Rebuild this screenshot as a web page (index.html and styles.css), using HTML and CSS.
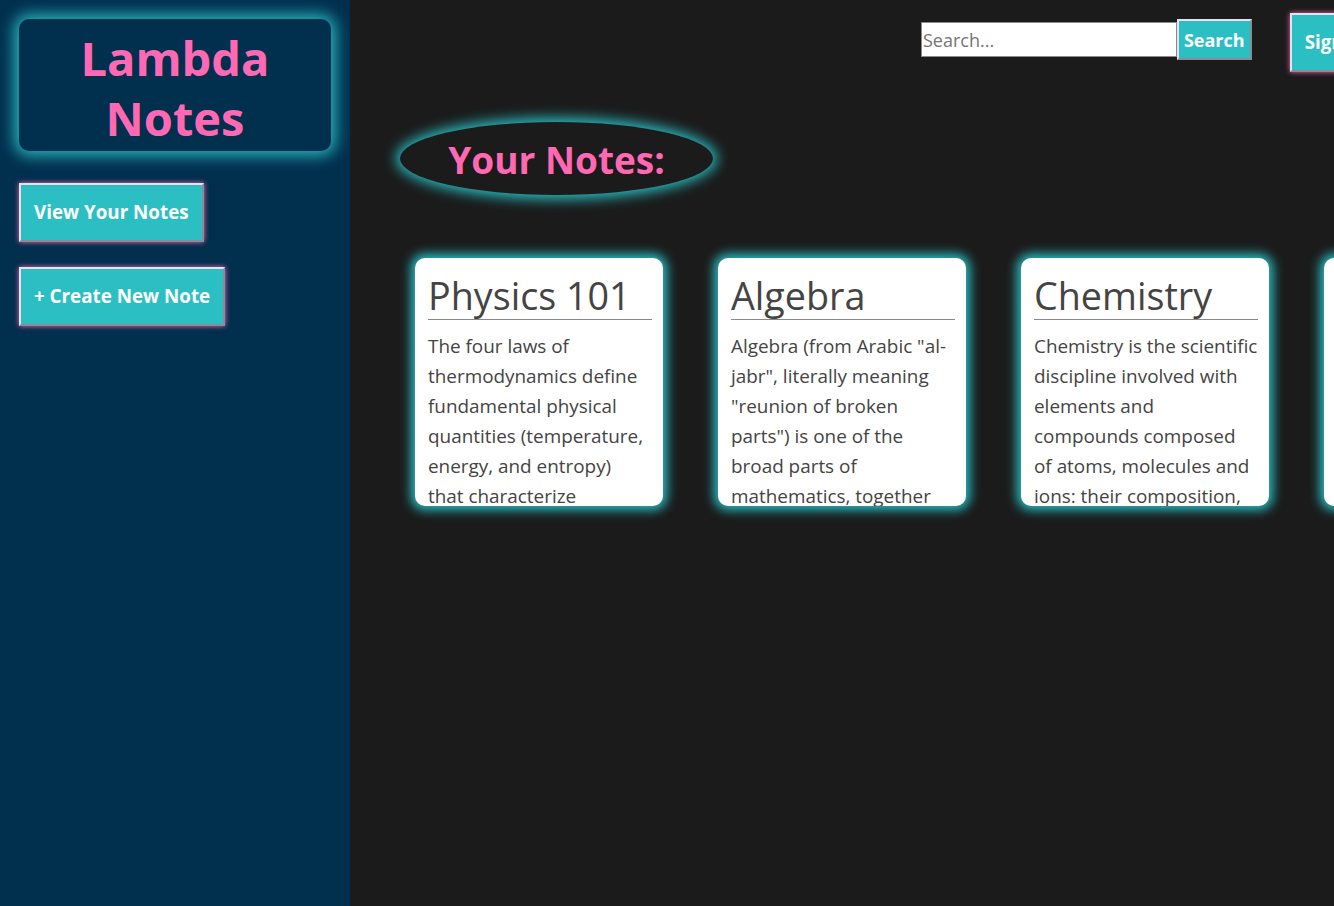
FILE: index.html
```html
<!DOCTYPE html>
<html lang="en">
<head>
<meta charset="utf-8">
<title>Lambda Notes</title>
<link rel="stylesheet" href="styles.css">
</head>
<body>
<div class="app">
  <aside class="sidebar">
    <div class="logo">Lambda Notes</div>
    <button class="btn">View Your Notes</button>
    <button class="btn">+ Create New Note</button>
  </aside>
  <main class="main">
    <header class="topbar">
      <form class="search">
        <input class="search-input" type="text" placeholder="Search...">
        <button class="search-btn" type="button">Search</button>
      </form>
      <button class="btn sign">Sign Out</button>
    </header>
    <h2 class="heading">Your Notes:</h2>
    <section class="cards">
      <article class="card">
        <h3 class="card-title">Physics 101</h3>
        <p class="card-body">The four laws of thermodynamics define fundamental physical quantities (temperature, energy, and entropy) that characterize thermodynamic systems at thermal equilibrium.</p>
      </article>
      <article class="card">
        <h3 class="card-title">Algebra</h3>
        <p class="card-body">Algebra (from Arabic "al-jabr", literally meaning "reunion of broken parts") is one of the broad parts of mathematics, together with number theory, geometry and analysis.</p>
      </article>
      <article class="card">
        <h3 class="card-title">Chemistry</h3>
        <p class="card-body">Chemistry is the scientific discipline involved with elements and compounds composed of atoms, molecules and ions: their composition, structure, properties and behavior.</p>
      </article>
      <article class="card">
        <h3 class="card-title">Biology</h3>
        <p class="card-body">Biology is the natural science that studies life and living organisms.</p>
      </article>
    </section>
  </main>
</div>
</body>
</html>
```

FILE: styles.css
```css
html, body {
  margin: 0;
  padding: 0;
  height: 100%;
  overflow: hidden;
}
body {
  font-family: "Open Sans", "Noto Sans", sans-serif;
  background: #1b1b1b;
}
.app {
  display: flex;
  height: 906px;
}
.sidebar {
  width: 350px;
  flex: none;
  background: #012f4e;
  padding: 19px 19px;
  box-sizing: border-box;
  display: flex;
  flex-direction: column;
  align-items: flex-start;
}
.logo {
  width: 312px;
  height: 132px;
  box-sizing: border-box;
  border-radius: 10px;
  background: #012f4e;
  box-shadow: 0 0 16px 4px #2bbfc4;
  color: #ff69b4;
  font-weight: 700;
  font-size: 47px;
  line-height: 60px;
  text-align: center;
  padding: 9px 50px 0;
  margin-bottom: 32px;
}
.btn {
  font-family: inherit;
  background: #2bbfc4;
  color: #fff;
  font-weight: 700;
  font-size: 18.8px;
  line-height: 25px;
  padding: 15px 13px;
  border: 2px solid;
  border-color: #e6e2f2 #8c8c96 #8c8c96 #e6e2f2;
  box-shadow: 0 0 5px #ff69b4;
  margin-bottom: 25px;
  cursor: pointer;
}
.main {
  flex: 1;
  min-width: 0;
  display: flex;
  flex-direction: column;
}
.topbar {
  display: flex;
  align-items: flex-start;
  justify-content: flex-end;
  margin-right: -65px;
  padding-top: 13px;
}
.search {
  display: flex;
  align-items: center;
  margin: 6px 38px 0 0;
}
.search-input {
  width: 256px;
  height: 35px;
  box-sizing: border-box;
  border: 1px solid #8a8a8a;
  font-family: inherit;
  font-size: 18px;
  padding: 0 1px;
  outline: none;
}
.search-input::placeholder {
  color: #757575;
}
.search-btn {
  height: 41px;
  font-family: inherit;
  background: #2bbfc4;
  color: #fff;
  font-weight: 700;
  font-size: 18px;
  padding: 0 5px;
  border: 2px solid;
  border-color: #e6e2f2 #8c8c96 #8c8c96 #e6e2f2;
}
.sign {
  margin-bottom: 0;
  white-space: nowrap;
}
.heading {
  align-self: flex-start;
  margin: 50px 0 0 50px;
  width: 313px;
  height: 73px;
  box-sizing: border-box;
  border-radius: 50%;
  background: #1b1b1b;
  box-shadow: 0 0 13px 4px #2bbfc4;
  color: #ff69b4;
  font-size: 37px;
  font-weight: 700;
  line-height: 75px;
  text-align: center;
}
.cards {
  display: flex;
  gap: 55px;
  margin: 63px 0 0 65px;
}
.card {
  flex: none;
  width: 248px;
  height: 248px;
  box-sizing: border-box;
  background: #fff;
  border-radius: 10px;
  box-shadow: 0 0 11px 4px #2bbfc4;
  padding: 15px 11.375px 0 13px;
  overflow: hidden;
  color: #444;
}
.card-title {
  margin: 0;
  font-size: 37.7px;
  font-weight: 400;
  line-height: 46px;
  border-bottom: 1px solid #888;
  white-space: nowrap;
}
.card-body {
  margin: 11px 0 0;
  font-size: 18.9px;
  line-height: 30px;
}
```
